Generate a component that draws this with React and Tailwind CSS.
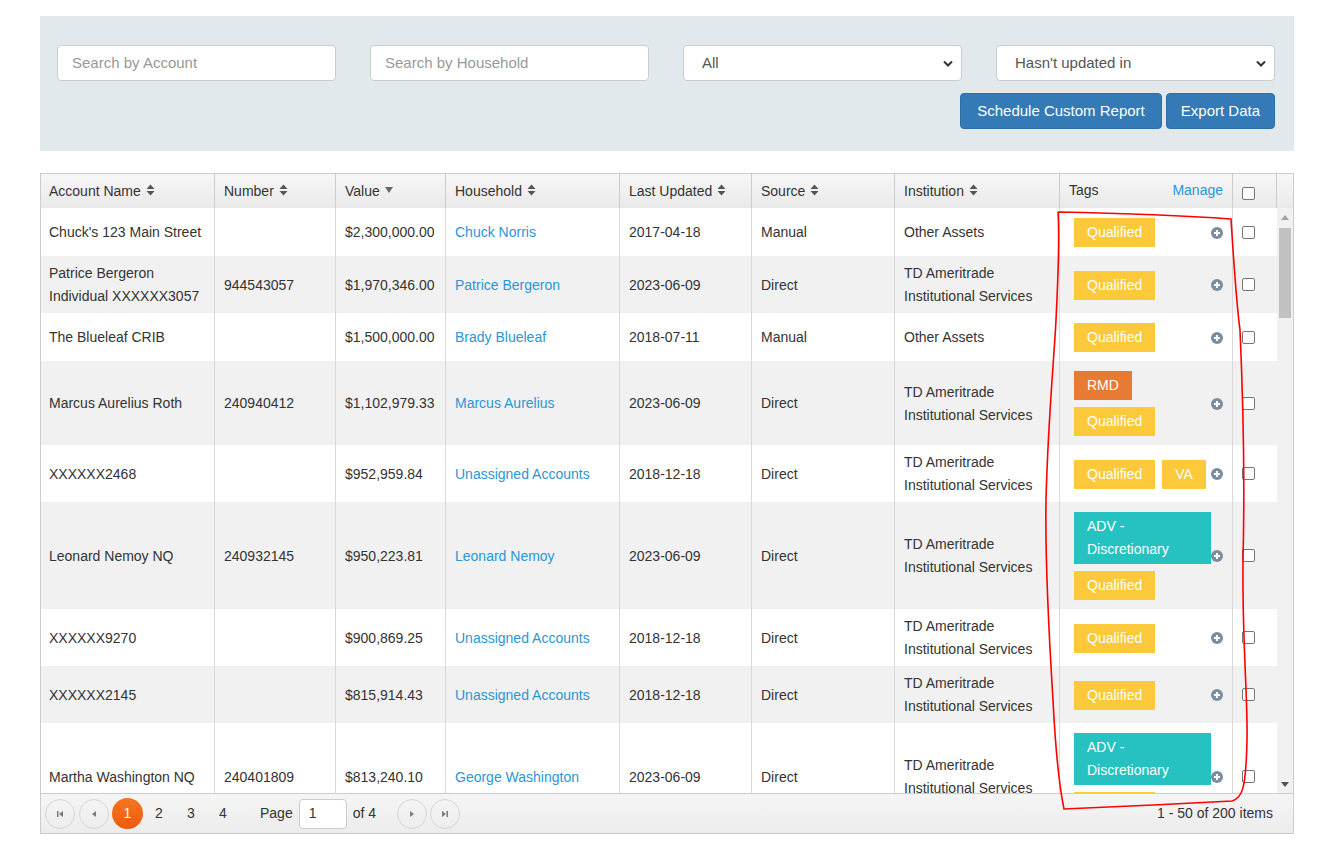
import React from 'react';

const rows = [
  { name: "Chuck's 123 Main Street", num: '', value: '$2,300,000.00', hh: 'Chuck Norris', date: '2017-04-18', src: 'Manual', inst: 'Other Assets', tags: ['Qualified'] },
  { name: 'Patrice Bergeron Individual XXXXXX3057', num: '944543057', value: '$1,970,346.00', hh: 'Patrice Bergeron', date: '2023-06-09', src: 'Direct', inst: 'TD Ameritrade Institutional Services', tags: ['Qualified'] },
  { name: 'The Blueleaf CRIB', num: '', value: '$1,500,000.00', hh: 'Brady Blueleaf', date: '2018-07-11', src: 'Manual', inst: 'Other Assets', tags: ['Qualified'] },
  { name: 'Marcus Aurelius Roth', num: '240940412', value: '$1,102,979.33', hh: 'Marcus Aurelius', date: '2023-06-09', src: 'Direct', inst: 'TD Ameritrade Institutional Services', tags: ['RMD', 'Qualified'] },
  { name: 'XXXXXX2468', num: '', value: '$952,959.84', hh: 'Unassigned Accounts', date: '2018-12-18', src: 'Direct', inst: 'TD Ameritrade Institutional Services', tags: ['Qualified', 'VA'] },
  { name: 'Leonard Nemoy NQ', num: '240932145', value: '$950,223.81', hh: 'Leonard Nemoy', date: '2023-06-09', src: 'Direct', inst: 'TD Ameritrade Institutional Services', tags: ['ADV - Discretionary', 'Qualified'] },
  { name: 'XXXXXX9270', num: '', value: '$900,869.25', hh: 'Unassigned Accounts', date: '2018-12-18', src: 'Direct', inst: 'TD Ameritrade Institutional Services', tags: ['Qualified'] },
  { name: 'XXXXXX2145', num: '', value: '$815,914.43', hh: 'Unassigned Accounts', date: '2018-12-18', src: 'Direct', inst: 'TD Ameritrade Institutional Services', tags: ['Qualified'] },
  { name: 'Martha Washington NQ', num: '240401809', value: '$813,240.10', hh: 'George Washington', date: '2023-06-09', src: 'Direct', inst: 'TD Ameritrade Institutional Services', tags: ['ADV - Discretionary', 'Qualified'] },
];

const tagColors = {
  Qualified: 'bg-[#fbc93a]',
  VA: 'bg-[#fbc93a]',
  RMD: 'bg-[#e87b33]',
  'ADV - Discretionary': 'bg-[#26c2c1]',
};

const widths = ['w-[174px]', 'w-[121px]', 'w-[110px]', 'w-[174px]', 'w-[132px]', 'w-[143px]', 'w-[165px]', 'w-[173px]', 'w-[44px]'];

function SortIcon() {
  return (
    <svg width="9" height="12" viewBox="0 0 9 12" className="inline-block ml-[5px] -mt-[2px]">
      <path d="M0.5 5 L4.5 0.5 L8.5 5 Z M0.5 7 L4.5 11.5 L8.5 7 Z" fill="#555" />
    </svg>
  );
}

function DownIcon() {
  return (
    <svg width="8" height="6" viewBox="0 0 8 6" className="inline-block ml-[5px] -mt-[2px]">
      <path d="M0 0 L8 0 L4 6 Z" fill="#666" />
    </svg>
  );
}

function Chevron() {
  return (
    <svg width="10" height="7" viewBox="0 0 10 7">
      <path d="M1 1.5 L5 5.5 L9 1.5" stroke="#333" strokeWidth="2" fill="none" />
    </svg>
  );
}

function PlusCircle() {
  return (
    <svg width="12" height="12" viewBox="0 0 12 12" className="shrink-0">
      <circle cx="6" cy="6" r="6" fill="#7a8e9f" />
      <path d="M6 3 V9 M3 6 H9" stroke="#fff" strokeWidth="2" />
    </svg>
  );
}

function Box() {
  return <span className="inline-block w-[13px] h-[13px] border border-[#767676] rounded-[2px] bg-white" />;
}

function PagerBtn({ d }) {
  return (
    <span className="w-[30px] h-[30px] rounded-full border border-[#d6d6d6] flex items-center justify-center">
      <svg width="10" height="10" viewBox="0 0 10 10">
        <path d={d} fill="#7a7a7a" />
      </svg>
    </span>
  );
}

export default function App() {
  const headers = [
    ['Account Name', 'sort'],
    ['Number', 'sort'],
    ['Value', 'down'],
    ['Household', 'sort'],
    ['Last Updated', 'sort'],
    ['Source', 'sort'],
    ['Institution', 'sort'],
  ];

  return (
    <div className="relative min-h-[860px] bg-white font-['Liberation_Sans',Arial,sans-serif] text-[14px] text-[#333]">
      <div className="pt-[16px] pl-[40px]">
        {/* Filters */}
        <div className="w-[1254px] h-[135px] bg-[#e1e9ec] px-[17px] pt-[29px]">
          <div className="flex gap-[34px]">
            <div className="w-[279px] h-[36px] bg-white border border-[#ccc] rounded-[4px] flex items-center px-[14px] text-[15px] text-[#999]">Search by Account</div>
            <div className="w-[279px] h-[36px] bg-white border border-[#ccc] rounded-[4px] flex items-center px-[14px] text-[15px] text-[#999]">Search by Household</div>
            <div className="w-[279px] h-[36px] bg-white border border-[#ccc] rounded-[4px] flex items-center justify-between pl-[18px] pr-[8px] text-[15px] text-[#555]">
              <span>All</span>
              <Chevron />
            </div>
            <div className="w-[279px] h-[36px] bg-white border border-[#ccc] rounded-[4px] flex items-center justify-between pl-[18px] pr-[8px] text-[15px] text-[#555]">
              <span>Hasn't updated in</span>
              <Chevron />
            </div>
          </div>
          <div className="flex justify-end gap-[4px] mt-[12px] pr-[2px]">
            <button className="h-[36px] px-[16px] bg-[#337ab7] border border-[#2e6da4] rounded-[4px] text-white text-[15px]">Schedule Custom Report</button>
            <button className="h-[36px] px-[14px] bg-[#337ab7] border border-[#2e6da4] rounded-[4px] text-white text-[15px]">Export Data</button>
          </div>
        </div>

        {/* Grid */}
        <div className="mt-[22px] w-[1254px] border border-[#ccc]">
          <div className="flex h-[35px] bg-gradient-to-b from-[#f7f7f7] to-[#e9e9e9] border-b border-[#ccc]">
            {headers.map(([label, kind], i) => (
              <div key={label} className={`${widths[i]} shrink-0 border-r border-[#ccc] flex items-center ${i === 0 ? 'pl-[8px]' : 'pl-[9px]'} pr-[9px]`}>
                {label}
                {kind === 'sort' ? <SortIcon /> : <DownIcon />}
              </div>
            ))}
            <div className={`${widths[7]} shrink-0 border-r border-[#ccc] flex items-center justify-between px-[9px]`}>
              <span className="-mt-[2px]">Tags</span>
              <span className="text-[#2a96d8] -mt-[2px]">Manage</span>
            </div>
            <div className={`${widths[8]} shrink-0 border-r border-[#ccc] flex items-center pl-[9px] pt-[4px]`}>
              <Box />
            </div>
            <div className="w-[16px] shrink-0" />
          </div>

          <div className="flex h-[585px] overflow-hidden -mt-[1px]">
            <div className="w-[1236px] shrink-0">
              {rows.map((r, idx) => (
                <div key={idx} className={`flex ${idx % 2 ? 'bg-[#f1f1f1]' : 'bg-white'} leading-[23px]`}>
                  {[r.name, r.num, r.value, r.hh, r.date, r.src, r.inst].map((v, i) => (
                    <div key={i} className={`${widths[i]} shrink-0 border-r border-[#d9d9d9] ${i === 0 ? 'pl-[8px]' : 'pl-[9px]'} pr-[9px] pt-[6px] pb-[5px] flex items-center ${i === 3 ? 'text-[#2a96d8]' : ''}`}>
                      <span>{v}</span>
                    </div>
                  ))}
                  <div className={`${widths[7]} shrink-0 border-r border-[#d9d9d9] pl-[14px] pt-[10px] pb-[9px] flex items-center`}>
                    <div className="w-[137px] flex flex-wrap gap-[7px]">
                      {r.tags.map((t) => (
                        <span key={t} className={`${tagColors[t]} text-white px-[13px] py-[3px] leading-[23px]`}>{t}</span>
                      ))}
                    </div>
                    <PlusCircle />
                  </div>
                  <div className={`${widths[8]} shrink-0 pl-[9px] flex items-center`}>
                    <Box />
                  </div>
                </div>
              ))}
            </div>
            {/* scrollbar */}
            <div className="w-[16px] shrink-0 bg-[#f1f1f1] flex flex-col items-center">
              <svg width="8" height="5" viewBox="0 0 8 5" className="mt-[7px]">
                <path d="M0 5 L4 0 L8 5 Z" fill="#a3a3a3" />
              </svg>
              <div className="w-[12px] h-[90px] bg-[#c1c1c1] mt-[8px]" />
              <div className="flex-1" />
              <svg width="8" height="5" viewBox="0 0 8 5" className="mb-[6px]">
                <path d="M0 0 L8 0 L4 5 Z" fill="#505050" />
              </svg>
            </div>
          </div>

          {/* Pager */}
          <div className="h-[40px] border-t border-[#ccc] bg-gradient-to-b from-[#f5f5f5] to-[#ececec] flex items-center pl-[4px] pr-[20px]">
            <div className="flex items-center gap-[4px]">
              <PagerBtn d="M2 2 H3.5 V8 H2 Z M8 2 V8 L4 5 Z" />
              <PagerBtn d="M7 2 V8 L3 5 Z" />
            </div>
            <span className="ml-[3px] w-[31px] h-[31px] rounded-full bg-gradient-to-b from-[#f6761f] to-[#ef5a0c] text-white flex items-center justify-center">1</span>
            <span className="w-[32px] text-center">2</span>
            <span className="w-[32px] text-center">3</span>
            <span className="w-[32px] text-center">4</span>
            <span className="ml-[21px]">Page</span>
            <span className="ml-[6px] w-[48px] h-[30px] bg-white border border-[#ccc] rounded-[4px] flex items-center pl-[9px]">1</span>
            <span className="ml-[6px]">of 4</span>
            <div className="ml-[21px] flex items-center gap-[3px]">
              <PagerBtn d="M3 2 V8 L7 5 Z" />
              <PagerBtn d="M2 2 V8 L6 5 Z M6.5 2 H8 V8 H6.5 Z" />
            </div>
            <span className="ml-auto">1 - 50 of 200 items</span>
          </div>
        </div>
      </div>

      {/* hand-drawn annotation */}
      <svg className="absolute inset-0 pointer-events-none" width="1334" height="860">
        <path
          d="M1058 212 C1110 213 1190 216 1231 219 C1233 250 1236 300 1240 330 C1244 420 1245 480 1243 560 C1242 640 1248 700 1247 740 C1246 790 1242 798 1232 801 C1180 804 1110 807 1064 809 C1058 780 1055 740 1053 700 C1048 620 1045 560 1046 500 C1048 420 1054 360 1056 320 C1058 280 1060 240 1058 212"
          stroke="#ff0000"
          strokeWidth="1.6"
          fill="none"
        />
      </svg>
    </div>
  );
}
